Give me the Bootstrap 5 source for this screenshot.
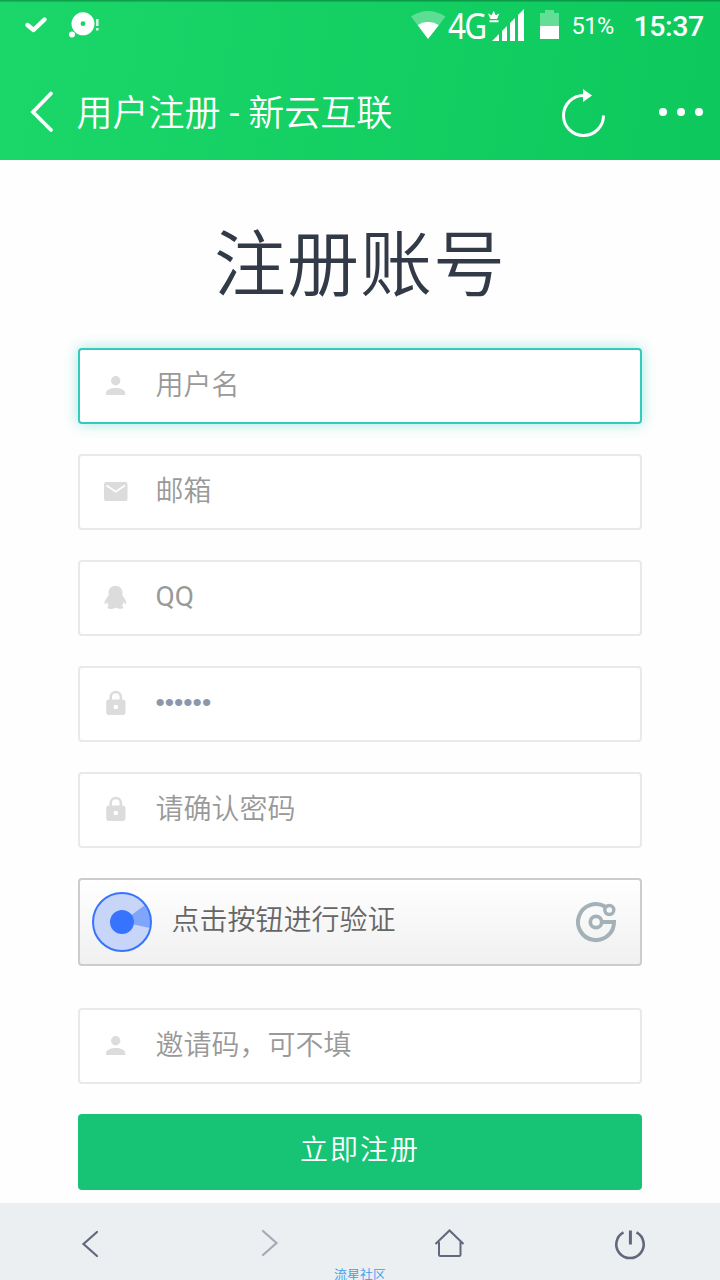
<!DOCTYPE html>
<html lang="zh-CN">
<head>
<meta charset="utf-8">
<meta name="viewport" content="width=device-width, initial-scale=1">
<title>用户注册 - 新云互联</title>
<link href="https://cdn.jsdelivr.net/npm/bootstrap@5.3.0/dist/css/bootstrap.min.css" rel="stylesheet">
<style>
body{width:720px;height:1280px;background:#fefefe;font-family:Roboto,"Noto Sans CJK SC DemiLight","Noto Sans CJK SC",sans-serif;font-size:28px;line-height:1;overflow:hidden}
svg{display:block;flex:none}
.top-area{height:160px;color:#fff;background:linear-gradient(100deg,#1bd669,#0dc95d)}
.top-area::before{content:"";display:block;height:2px;margin-bottom:-2px;background:linear-gradient(rgba(0,70,30,.45),rgba(0,70,30,.15))}
.status-row{height:50px;padding:0 16px 0 24px}
.net-type{font-family:"Noto Sans",sans-serif;font-size:37px;letter-spacing:-2px;transform:scaleX(.85);transform-origin:0 50%;width:40px;margin-left:1px;margin-top:-1px;flex:none}
.percent-text{font-size:23.5px;width:62px;padding-top:4px;letter-spacing:-.4px;text-indent:-.5px}
.clock-text{font-size:28.5px;font-weight:500;width:70px;padding-top:4px;letter-spacing:-.4px;text-indent:-.5px}
.title-row{height:110px;padding:13px 16px 0 28px}
.page-name{font-size:36px;font-weight:350;line-height:52px;margin:5px 0 0 20.5px}
.page-name span{font-weight:400}
.form-area{width:564px}
.form-title{font-size:72px;font-weight:350;line-height:104px;color:#313a46;margin:54px 0 30px;height:104px;letter-spacing:1px}
.field-box{height:76px;border:2px solid #e9e9e9;border-radius:4px;margin-bottom:30px;padding-left:22px;color:#999;font-weight:350;background:#fff}
.field-box.active-field{border-color:#33cbbd;box-shadow:0 0 14px rgba(51,203,189,.45)}
.field-box svg{fill:#dcdcdc;width:28px;height:28px}
.field-box span{margin-left:25.5px;line-height:40px;padding-bottom:1px}
.field-box .latin-text{font-weight:400;padding-bottom:2px}
.field-box .dots-text{color:#8d97ac;font-family:"Liberation Sans",sans-serif;font-weight:400;font-size:26.500px;padding-bottom:4px}
.verify-box{height:88px;border:2px solid #ccc;border-radius:4px;background:linear-gradient(#fff,#f0f0f0);margin-bottom:42px;padding:0 22px 0 12px;color:#666;font-weight:350}
.verify-box span{line-height:40px;padding-bottom:2px;margin-left:19.5px}
.submit-button,.submit-button:hover{height:76px;border:0;border-radius:4px;background:#17c476;color:#fff;font-size:28px;font-weight:350;letter-spacing:2px;line-height:40px;padding:0 0 2px}
.bottom-bar{height:77px;background:#ebeff2;margin-top:13px;position:relative;color:#63677d}
.bottom-bar svg{fill:none;stroke:currentColor;stroke-width:2.2}
.community{position:absolute;left:0;width:720px;top:62px;text-align:center;color:#3f9bee;font-size:13px;line-height:19px}
</style>
</head>
<body>
<header class="top-area">
  <div class="status-row d-flex align-items-center">
    <svg width="24" height="50"><path d="M3.500 25 9.500 30l11-10.500" fill="none" stroke="#fff" stroke-width="4.400" stroke-linecap="round" stroke-linejoin="round"/></svg>
    <svg width="36" height="50" class="ms-3"><path fill="#fff" fill-rule="evenodd" d="M19 12.300a11.500 11.500 0 1 1 0 23 11.500 11.500 0 0 1 0-23m0 9a2.400 2.400 0 1 0 0 4.800 2.400 2.400 0 0 0 0-4.800"/><circle cx="8" cy="34.500" r="3" fill="#fff"/><path d="M33.300 19v7m0 2v2.500" stroke="#d1f7e0" stroke-width="2.600"/></svg>
    <svg class="ms-auto" width="36" height="50"><path d="M0 16.500Q17 5.500 34.500 16.500L28 25Q17 18 6.500 25z" fill="#fff" opacity=".32"/><path d="M6.500 25Q17 18.500 28 25L17 39z" fill="#fff"/></svg>
    <div class="net-type">4G</div>
    <svg width="37" height="50" fill="#fff"><path d="M4 41 11 34v7zM14 31l5-5v15h-5zM22 23l5-5v23h-5zM30 15l6-6v32h-6zM2.500 19 0 13.500l3.700 1.700 2-4.500 2 4.500 3.700-1.700L9 19zM1.500 20.300h9V22.300h-9z"/></svg>
    <svg width="20" height="50" style="margin:0 12px 0 15px"><path d="M0 13h5v-3h9v3h5v26H0z" fill="#fff" opacity=".35"/><path d="M0 26h19v13H0z" fill="#fff"/></svg>
    <div class="percent-text">51%</div>
    <div class="clock-text">15:37</div>
  </div>
  <div class="title-row d-flex align-items-center">
    <svg width="28" height="46" viewBox="0 0 28 46"><path d="M23 4.500 5 23 23 41" fill="none" stroke="#fff" stroke-width="3.800" stroke-linecap="round"/></svg>
    <h1 class="page-name">用户注册<span> - </span>新云互联</h1>
    <svg class="ms-auto" width="48" height="56" viewBox="560 84 48 56"><path d="M583.500 95.500a20 20 0 1 0 20 20" fill="none" stroke="#fff" stroke-width="3"/><path d="m583 89 9 6.500-9 6.500z" fill="#fff"/></svg>
    <svg width="48" height="56" viewBox="656 84 48 56" style="margin-left:48px" fill="#fff"><circle cx="663" cy="112" r="4"/><circle cx="681" cy="112" r="4"/><circle cx="699" cy="112" r="4"/></svg>
  </div>
</header>
<main class="form-area mx-auto">
  <h2 class="form-title text-center">注册账号</h2>
  <div class="field-box active-field d-flex align-items-center"><svg viewBox="0 0 28 28"><circle cx="13.700" cy="8.700" r="4.700"/><path d="M4 23v-2c0-3 5-5 9.700-5s9.500 2 9.500 5v2z"/></svg><span>用户名</span></div>
  <div class="field-box d-flex align-items-center"><svg viewBox="0 0 28 28"><rect x="2" y="4" width="23.500" height="19" rx="2"/><path d="m4.500 7.500 9.300 6.200L23 7.500" fill="none" stroke="#fff" stroke-width="1.700"/></svg><span>邮箱</span></div>
  <div class="field-box d-flex align-items-center"><svg viewBox="0 0 28 28"><path d="M13.500 1.700c-4 0-7 3-7 7v3c-2 2-4 5-4 7.500 0 1.200 1 1 2.500-1 .3 1.400 1 2.500 2 3.400-1.800.7-2 2.800 0 3.200 2.300.5 5 0 6.500-1.300 2 1.300 4.800 1.700 6.700 1.100 1.800-.6 1.300-2.300-.5-3 1-.9 1.700-2 2.100-3.400 1.500 2 2.500 2.200 2.500 1 0-2.500-1.800-5.500-3.800-7.500v-3c0-4-3-7-7-7"/></svg><span class="latin-text">QQ</span></div>
  <div class="field-box d-flex align-items-center"><svg viewBox="0 0 28 28"><path fill-rule="evenodd" d="M7.500 9.500V7a6.300 6.300 0 0 1 12.600 0V9.500H21c1.300 0 2.500 1 2.500 2.300v11c0 1.200-1 2.200-2.200 2.200H6.500c-1.300 0-2.300-1-2.300-2.200v-11c0-1.300 1-2.300 2.300-2.300zm2.500 0h7.600V7a3.800 3.800 0 0 0-7.600 0zm3.800 5.200a2.300 2.300 0 1 0 0 4.600 2.300 2.300 0 0 0 0-4.600"/></svg><span class="dots-text">••••••</span></div>
  <div class="field-box d-flex align-items-center"><svg viewBox="0 0 28 28"><path fill-rule="evenodd" d="M7.500 9.500V7a6.300 6.300 0 0 1 12.600 0V9.500H21c1.300 0 2.500 1 2.500 2.300v11c0 1.200-1 2.200-2.200 2.200H6.500c-1.300 0-2.300-1-2.300-2.200v-11c0-1.300 1-2.300 2.300-2.300zm2.500 0h7.600V7a3.800 3.800 0 0 0-7.600 0zm3.800 5.200a2.300 2.300 0 1 0 0 4.600 2.300 2.300 0 0 0 0-4.600"/></svg><span>请确认密码</span></div>
  <div class="verify-box d-flex align-items-center">
    <svg width="60" height="60" viewBox="0 0 60 60"><circle cx="30" cy="30" r="29" fill="#c6d5f8"/><path d="M30 30 53 13A29 29 0 0 1 58 36z" fill="#80a6fb"/><circle cx="30" cy="30" r="29" fill="none" stroke="#3873ff" stroke-width="2"/><circle cx="30" cy="30" r="12" fill="#3873ff"/></svg>
    <span>点击按钮进行验证</span>
    <svg class="ms-auto" width="44" height="44" viewBox="0 0 44 44" fill="none" stroke="#a3b1b8" stroke-width="4"><path d="M31 6.500A18 18 0 1 0 40 22H28"/><circle cx="22" cy="22" r="5.700" stroke-width="3.700"/><circle cx="35.300" cy="10" r="4.500" stroke-width="3.400"/></svg>
  </div>
  <div class="field-box d-flex align-items-center"><svg viewBox="0 0 28 28"><circle cx="13.700" cy="8.700" r="4.700"/><path d="M4 23v-2c0-3 5-5 9.700-5s9.500 2 9.500 5v2z"/></svg><span>邀请码，可不填</span></div>
  <button type="button" class="btn submit-button w-100 d-flex align-items-center justify-content-center">立即注册</button>
</main>
<nav class="bottom-bar d-flex">
  <svg width="180" height="77"><path d="M97 29 83.500 41 97 53" stroke-linecap="round"/></svg>
  <svg width="180" height="77" style="opacity:.5"><path d="m83 28 13.500 12L83 52" stroke-linecap="round"/></svg>
  <svg width="180" height="77"><path d="m75.500 41 14-13.500 14 13.500M79 39v12.500q0 1.500 1.500 1.500h18.500q1.500 0 1.500-1.500V39" stroke-width="2"/></svg>
  <svg width="180" height="77"><path d="M83.500 29.300a13.700 13.700 0 1 0 13 0" stroke-width="2.600"/><path d="M90.400 27.500v14" stroke-width="3"/></svg>
  <div class="community">流星社区</div>
</nav>
<script src="https://cdn.jsdelivr.net/npm/bootstrap@5.3.0/dist/js/bootstrap.bundle.min.js"></script>
</body>
</html>
